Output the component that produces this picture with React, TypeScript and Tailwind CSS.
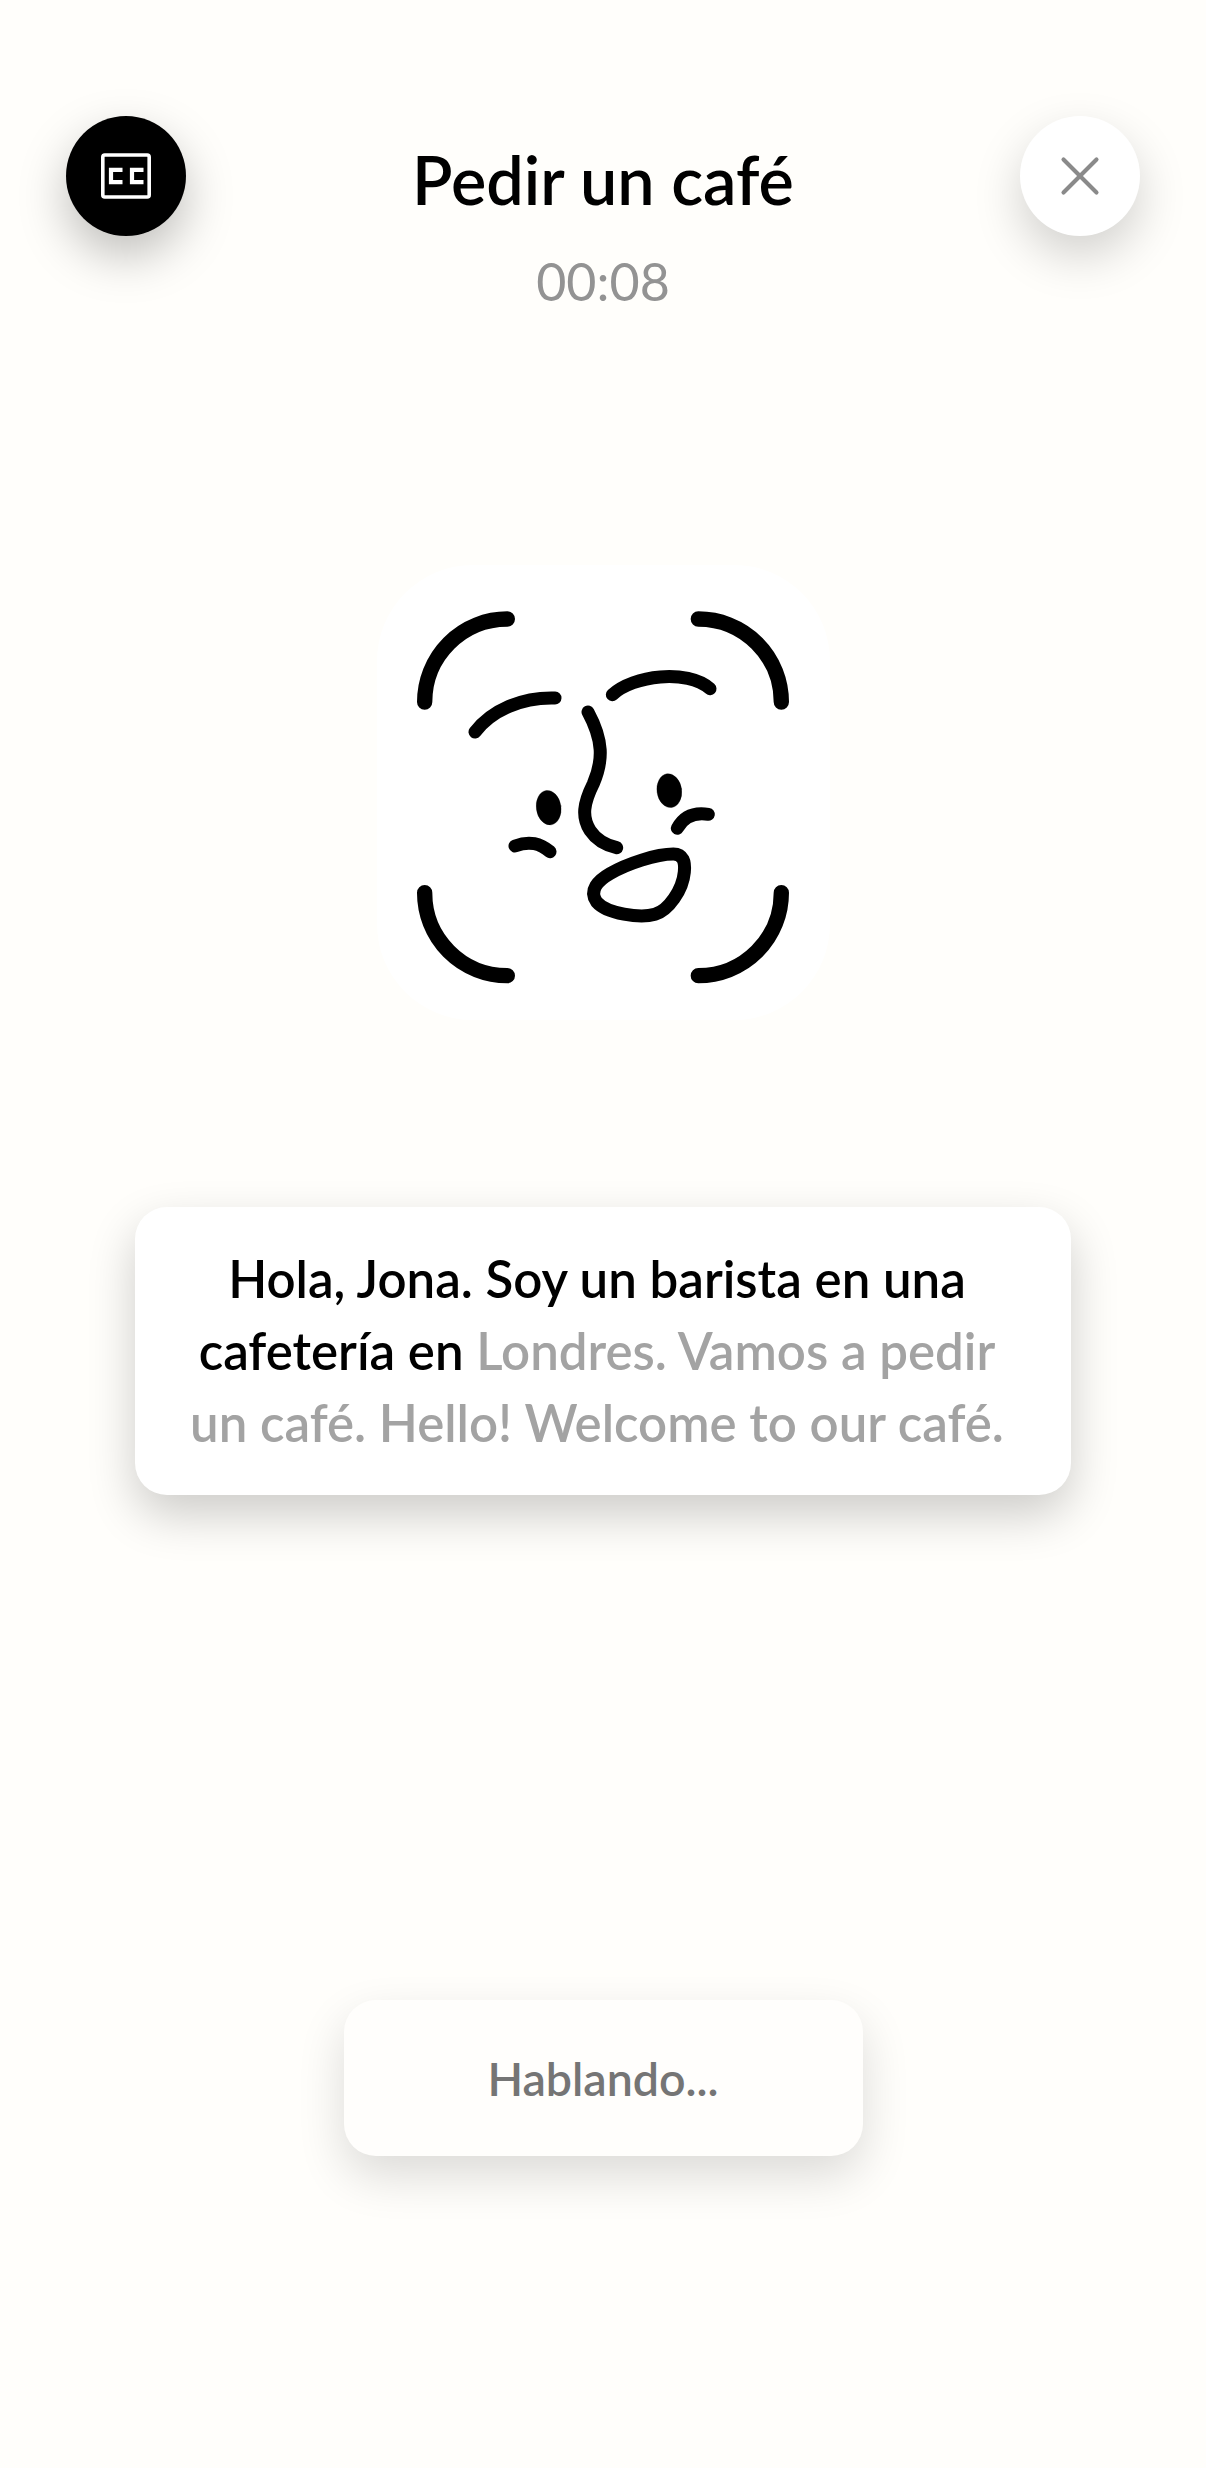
import React from 'react';
import { X } from 'lucide-react';

const FaceIcon = () => (
  <svg viewBox="9 8 1560 1500" className="w-[520px] h-[500px]" fill="none" stroke="#000" strokeLinecap="round" strokeLinejoin="round">
    <g strokeWidth={46}>
      <path d="M254 485 A248 249 0 0 1 502 236" />
      <path d="M1075 236 A249 249 0 0 1 1324 485" />
      <path d="M254 1057 A248 248 0 0 0 502 1306" />
      <path d="M1075 1306 A249 249 0 0 0 1324 1057" />
    </g>
    <g strokeWidth={39}>
      <path d="M405 575 C455 510 545 470 645 473" />
      <path d="M817 463 C880 405 1040 385 1110 445" />
      <path d="M744 515 C790 600 790 660 760 730 C730 790 725 830 750 870 C770 900 800 915 830 922" />
      <path d="M525 917 C570 900 600 910 630 934" />
      <path d="M1012 864 C1030 830 1060 815 1105 822" />
      <path d="M1000 941 C1030 941 1036 965 1033 995 C1028 1050 985 1110 945 1122 C900 1135 800 1120 770 1085 C745 1050 775 1020 810 1000 C860 970 950 941 1000 941 Z" />
    </g>
    <ellipse cx="626" cy="802" rx="37" ry="52" transform="rotate(-8 626 802)" fill="#000" />
    <ellipse cx="988" cy="751" rx="37" ry="51" transform="rotate(-8 988 751)" fill="#000" />
  </svg>
);

const CcIcon = () => (
  <svg viewBox="0 0 50 46" className="w-[50px] h-[46px]" fill="none" stroke="#fff">
    <rect x="1.8" y="2" width="46.4" height="42" rx="2" strokeWidth={3.6} />
    <path d="M21.5 16.8 H10 V29.2 H21.5" strokeWidth={4.2} />
    <path d="M42.5 16.8 H31 V29.2 H42.5" strokeWidth={4.2} />
  </svg>
);

const App: React.FC = () => {
  return (
    <div className="w-[1206px] h-[2468px] overflow-hidden bg-[#fffefb] font-['Lato','Noto_Sans',sans-serif] flex flex-col items-center">
      <div className="w-full px-[66px] pt-[116px] flex justify-between items-start">
        <button className="w-[120px] h-[120px] rounded-full bg-black flex items-center justify-center shadow-[0_20px_48px_rgba(0,0,0,0.25)]">
          <CcIcon />
        </button>
        <div className="flex flex-col items-center pt-[23px]">
          <h1 className="text-[66.5px] leading-[80px] font-semibold text-black">Pedir un café</h1>
          <p className="mt-[32px] text-[52px] leading-[60px] text-[#939393]">00:08</p>
        </div>
        <button className="w-[120px] h-[120px] rounded-full bg-white flex items-center justify-center shadow-[0_20px_48px_rgba(0,0,0,0.18)]">
          <X size={66} strokeWidth={1.5} color="#8a8a8a" />
        </button>
      </div>

      <div className="mt-[254px] w-[453px] h-[455px] rounded-[96px] bg-white flex items-center justify-center">
        <div className="shrink-0 flex items-center justify-center">
          <FaceIcon />
        </div>
      </div>

      <div className="mt-[187px] w-[936px] h-[288px] rounded-[32px] bg-white shadow-[0_20px_48px_rgba(0,0,0,0.2)] flex items-center justify-center pl-[40px] pr-[52px]">
        <p className="text-center text-[51px] leading-[72px] font-semibold text-black">
          Hola, Jona. Soy un barista en una cafetería en <span className="text-[#a3a3a3]">Londres. Vamos a pedir un café. Hello! Welcome to our café.</span>
        </p>
      </div>

      <div className="mt-[505px] w-[519px] h-[156px] rounded-[32px] bg-[#fffefc] shadow-[0_20px_48px_rgba(0,0,0,0.14)] flex items-center justify-center">
        <span className="text-[46.5px] leading-[60px] font-semibold text-[#757575]">Hablando...</span>
      </div>
    </div>
  );
};

export default App;
